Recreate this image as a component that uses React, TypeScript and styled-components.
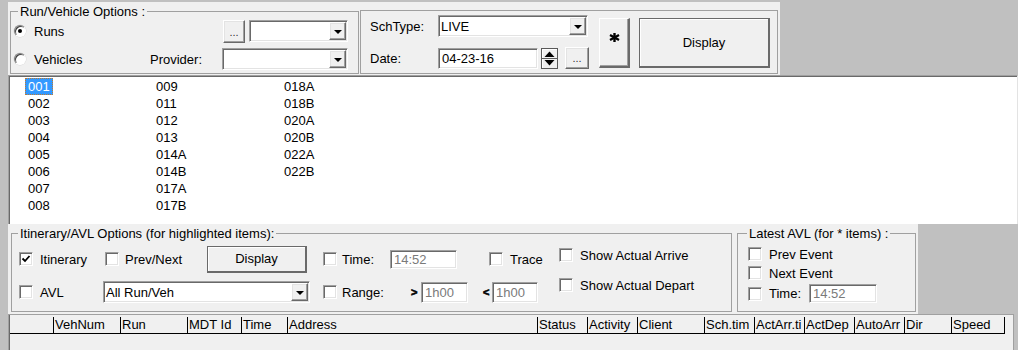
import React from "react";
import styled, { createGlobalStyle, css } from "styled-components";

const GlobalStyle = createGlobalStyle`
  html, body {
    margin: 0;
    padding: 0;
  }
  body {
    background: #c0c0c0;
    font-family: "Liberation Sans", Arial, sans-serif;
    font-size: 13px;
    color: #000;
  }
`;

const sunken = css`
  box-sizing: border-box;
  border: 1px solid;
  border-color: #a0a0a0 #fff #fff #a0a0a0;
  box-shadow: inset 1px 1px #696969, inset -1px -1px #e3e3e3;
  background: #fff;
`;

const raised = css`
  box-sizing: border-box;
  border: 1px solid;
  border-color: #fff #696969 #696969 #fff;
  box-shadow: inset -1px -1px #a0a0a0, inset 1px 1px #e3e3e3;
  background: #f0f0f0;
`;

const Window = styled.div`
  width: 1018px;
  height: 350px;
  overflow: hidden;
  box-sizing: border-box;
  padding-left: 8px;
  background: #c0c0c0;
  display: flex;
  flex-direction: column;
`;

const TopRow = styled.div`
  height: 75px;
  flex: none;
  display: flex;
  align-items: flex-start;
`;

const TopPanel = styled.div`
  margin-top: 2px;
  width: 772px;
  height: 73px;
  background: #f0f0f0;
  display: flex;
  align-items: flex-start;
  padding-left: 2px;
  box-sizing: border-box;
`;

const GroupBox = styled.fieldset<{ $w: number; $h: number; $top: number; $left?: number }>`
  margin: ${(p) => p.$top}px 0 0 ${(p) => p.$left ?? 0}px;
  padding: 0;
  min-width: 0;
  width: ${(p) => p.$w}px;
  height: ${(p) => p.$h}px;
  box-sizing: border-box;
  border: 1px solid #a0a0a0;
`;

const Legend = styled.legend<{ $indent: number }>`
  margin-left: ${(p) => p.$indent}px;
  padding: 0 2px;
  line-height: 15px;
  font-size: 13px;
`;

const RunVehicleBody = styled.div`
  padding: 1px 0 0 3px;
  display: flex;
  flex-direction: column;
  gap: 6px;
`;

const Row = styled.div<{ $h?: number }>`
  display: flex;
  align-items: center;
  height: ${(p) => p.$h ?? 22}px;
`;

const OptionLabel = styled.label<{ $w?: number; $gap?: number; $indent?: number }>`
  display: flex;
  align-items: center;
  gap: ${(p) => p.$gap ?? 7}px;
  margin-left: ${(p) => p.$indent ?? 0}px;
  width: ${(p) => (p.$w ? `${p.$w}px` : "auto")};
  flex: none;
  white-space: nowrap;
`;

const RadioDot = styled.span<{ $on?: boolean }>`
  width: 12px;
  height: 12px;
  flex: none;
  border-radius: 50%;
  box-sizing: border-box;
  background: #fff;
  border: 1px solid;
  border-color: #808080 #fff #fff #808080;
  box-shadow: inset 1px 1px #404040, 0 0 0 0.5px #d8d8d8;
  display: flex;
  align-items: center;
  justify-content: center;

  &::after {
    content: "";
    width: 4px;
    height: 4px;
    border-radius: 50%;
    background: ${(p) => (p.$on ? "#000" : "transparent")};
  }
`;

const CheckBox = styled.span`
  ${sunken};
  width: 14px;
  height: 14px;
  flex: none;
  display: flex;
  align-items: center;
  justify-content: center;
`;

const FieldLabel = styled.span<{ $w: number }>`
  width: ${(p) => p.$w}px;
  flex: none;
  white-space: nowrap;
`;

const ComboBox = styled.div<{ $w: number; $left?: number }>`
  ${sunken};
  width: ${(p) => p.$w}px;
  height: 22px;
  margin-left: ${(p) => p.$left ?? 0}px;
  flex: none;
  display: flex;
  align-items: center;
`;

const ComboText = styled.span`
  flex: 1;
  padding-left: 2px;
  white-space: nowrap;
  overflow: hidden;
`;

const DropButton = styled.span`
  ${raised};
  width: 17px;
  height: 18px;
  margin: 1px;
  flex: none;
  display: flex;
  align-items: center;
  justify-content: center;

  &::after {
    content: "";
    border-left: 4px solid transparent;
    border-right: 4px solid transparent;
    border-top: 4px solid #000;
    margin-top: 1px;
  }
`;

const TextField = styled.div<{ $w: number; $h?: number; $disabled?: boolean }>`
  ${sunken};
  width: ${(p) => p.$w}px;
  height: ${(p) => p.$h ?? 21}px;
  flex: none;
  padding-left: 3px;
  display: flex;
  align-items: center;
  color: ${(p) => (p.$disabled ? "#7a7a7a" : "#000")};
`;

const DotsButton = styled.span<{ $w: number; $h: number; $left?: number }>`
  ${raised};
  width: ${(p) => p.$w}px;
  height: ${(p) => p.$h}px;
  margin-left: ${(p) => p.$left ?? 0}px;
  flex: none;
  display: flex;
  align-items: flex-end;
  justify-content: center;
  font-size: 11px;
  line-height: 14px;
  padding-bottom: 3px;
  color: #333;
`;

const PushButton = styled.button<{ $w: number; $h: number; $left?: number; $top?: number }>`
  box-sizing: border-box;
  width: ${(p) => p.$w}px;
  height: ${(p) => p.$h}px;
  margin: ${(p) => p.$top ?? 0}px 0 0 ${(p) => p.$left ?? 0}px;
  flex: none;
  padding: 0;
  font-family: inherit;
  font-size: 13px;
  color: #000;
  background: #f0f0f0;
  border: 1px solid #6a6a6a;
  border-right-width: 2px;
  border-bottom-width: 2px;
  box-shadow: inset 1px 1px #fff;
`;

const AsteriskButton = styled(PushButton)`
  border-color: #fff #6a6a6a #6a6a6a #fff;
  box-shadow: inset -1px -1px #a0a0a0;
  display: flex;
  justify-content: center;
  align-items: flex-start;
  padding-top: 14px;
`;

const SchedBody = styled.div`
  padding: 4px 0 0 9px;
  display: flex;
  align-items: flex-start;
`;

const SchedFields = styled.div`
  display: flex;
  flex-direction: column;
  gap: 10px;
`;

const RunList = styled.div`
  height: 149px;
  flex: none;
  box-sizing: border-box;
  background: #fff;
  border-top: 1px solid #a0a0a0;
  border-left: 1px solid #a0a0a0;
  border-right: 1px solid #e3e3e3;
  box-shadow: inset 1px 1px #696969;
  padding: 2px 0 0 17px;
  display: grid;
  grid-auto-flow: column;
  grid-template-rows: repeat(8, 17px);
  grid-auto-columns: 128px;
`;

const RunCell = styled.div`
  display: flex;
  align-items: center;
`;

const RunText = styled.span<{ $selected?: boolean }>`
  line-height: 15px;
  padding: 0 2px;
  box-sizing: border-box;
  border: 1px dotted ${(p) => (p.$selected ? "#c07a30" : "transparent")};
  margin-left: -1px;
  background: ${(p) => (p.$selected ? "#3399ff" : "transparent")};
  color: ${(p) => (p.$selected ? "#fff" : "#000")};
`;

const BottomRow = styled.div`
  height: 90px;
  flex: none;
  display: flex;
`;

const BottomPanel = styled.div`
  width: 910px;
  background: #f0f0f0;
  display: flex;
  align-items: flex-start;
  padding-left: 3px;
  box-sizing: border-box;
`;

const ItineraryBody = styled.div`
  display: flex;
  align-items: flex-start;
  padding-left: 7px;
`;

const OptionsGrid = styled.div`
  margin-top: 3px;
  display: grid;
  grid-template-columns: 84px 220px 236px;
  grid-template-rows: 30px 30px;
  row-gap: 3px;
  align-items: center;
`;

const GridCell = styled.div`
  display: flex;
  align-items: center;
`;

const ShowColumn = styled.div`
  margin-top: 4px;
  display: flex;
  flex-direction: column;
  gap: 10px;
`;

const ShowItem = styled.div`
  height: 20px;
  display: flex;
  align-items: center;
`;

const Chevron = styled.span<{ $w: number; $left: number }>`
  width: ${(p) => p.$w}px;
  margin-left: ${(p) => p.$left}px;
  font-weight: bold;
  font-size: 11px;
  flex: none;
  -webkit-text-stroke: 0.6px #000;
`;

const LatestBody = styled.div`
  padding: 4px 0 0 10px;
  display: flex;
  flex-direction: column;
  gap: 1px;
`;

const GridArea = styled.div`
  flex: 1;
  background: #f0f0f0;
  border-top: 1px solid #a0a0a0;
  border-left: 1px solid #a0a0a0;
  box-shadow: inset 1px 0 #696969;
  padding: 1px 0 0 1px;
  margin-right: 4px;
  border-right: 1px solid #a0a0a0;
`;

const HeaderRow = styled.div`
  display: inline-flex;
  height: 17px;
  box-sizing: border-box;
  border-bottom: 1px solid #000;
  margin-top: 1px;
`;

const HeaderCell = styled.div<{ $w: number }>`
  width: ${(p) => p.$w}px;
  box-sizing: border-box;
  border-right: 1px solid #000;
  padding-left: 1px;
  line-height: 16px;
  white-space: nowrap;
  overflow: hidden;
`;

const CheckMark = () => (
  <svg width="10" height="10" viewBox="0 0 10 10">
    <polyline points="1.5,4.5 4,7 8.5,2" fill="none" stroke="#000" strokeWidth="1.8" />
  </svg>
);

const SpinIcon = () => (
  <svg width="17" height="21" viewBox="0 0 17 21" style={{ flex: "none", marginLeft: 3 }}>
    <rect x="0.5" y="0.5" width="16" height="20" fill="#f0f0f0" stroke="#5a5a5a" />
    <line x1="1" y1="1.5" x2="16" y2="1.5" stroke="#fff" />
    <line x1="1.5" y1="1" x2="1.5" y2="20" stroke="#fff" />
    <line x1="1" y1="10.5" x2="16" y2="10.5" stroke="#5a5a5a" />
    <polygon points="3.5,9 13.5,9 8.5,3.5" fill="#000" />
    <polygon points="3.5,12 13.5,12 8.5,17.5" fill="#000" />
  </svg>
);

const HeavyAsterisk = () => (
  <svg width="11" height="9" viewBox="0 0 11 9">
    <g stroke="#000" strokeWidth="2.4">
      <line x1="5.5" y1="0" x2="5.5" y2="9" />
      <line x1="1" y1="2" x2="10" y2="7" />
      <line x1="1" y1="7" x2="10" y2="2" />
    </g>
  </svg>
);

type OptProps = { label: string; checked?: boolean; w?: number; gap?: number; indent?: number };

const Check = ({ label, checked, w, gap, indent }: OptProps) => (
  <OptionLabel $w={w} $gap={gap} $indent={indent}>
    <CheckBox>{checked && <CheckMark />}</CheckBox>
    <span>{label}</span>
  </OptionLabel>
);

const Radio = ({ label, checked, w }: OptProps) => (
  <OptionLabel $w={w} $gap={8}>
    <RadioDot $on={checked} />
    <span>{label}</span>
  </OptionLabel>
);

const Combo = ({ w, value, left }: { w: number; value?: string; left?: number }) => (
  <ComboBox $w={w} $left={left}>
    <ComboText>{value}</ComboText>
    <DropButton />
  </ComboBox>
);

const runs = [
  "001", "002", "003", "004", "005", "006", "007", "008",
  "009", "011", "012", "013", "014A", "014B", "017A", "017B",
  "018A", "018B", "020A", "020B", "022A", "022B",
];

const columns = [
  { label: "", w: 44 },
  { label: "VehNum", w: 67 },
  { label: "Run", w: 67 },
  { label: "MDT Id", w: 54 },
  { label: "Time", w: 46 },
  { label: "Address", w: 250 },
  { label: "Status", w: 50 },
  { label: "Activity", w: 50 },
  { label: "Client", w: 67 },
  { label: "Sch.tim", w: 50 },
  { label: "ActArr.ti", w: 50 },
  { label: "ActDep", w: 50 },
  { label: "AutoArr", w: 50 },
  { label: "Dir", w: 47 },
  { label: "Speed", w: 53 },
];

const App = () => {
  return (
    <>
      <GlobalStyle />
      <Window>
        <TopRow>
          <TopPanel>
            <GroupBox $w={349} $h={70} $top={2}>
              <Legend $indent={7}>Run/Vehicle Options :</Legend>
              <RunVehicleBody>
                <Row>
                  <Radio label="Runs" checked w={209} />
                  <DotsButton $w={22} $h={23}>...</DotsButton>
                  <Combo w={99} left={4} />
                </Row>
                <Row>
                  <Radio label="Vehicles" w={136} />
                  <FieldLabel $w={72}>Provider:</FieldLabel>
                  <Combo w={126} />
                </Row>
              </RunVehicleBody>
            </GroupBox>
            <GroupBox $w={418} $h={64} $top={8} $left={1}>
              <SchedBody>
                <SchedFields>
                  <Row>
                    <FieldLabel $w={68}>SchType:</FieldLabel>
                    <Combo w={150} value="LIVE" />
                  </Row>
                  <Row>
                    <FieldLabel $w={68}>Date:</FieldLabel>
                    <TextField $w={100}>04-23-16</TextField>
                    <SpinIcon />
                    <DotsButton $w={24} $h={22} $left={7}>...</DotsButton>
                  </Row>
                </SchedFields>
                <AsteriskButton $w={31} $h={50} $left={10} $top={3}>
                  <HeavyAsterisk />
                </AsteriskButton>
                <PushButton $w={131} $h={50} $left={9} $top={3}>
                  Display
                </PushButton>
              </SchedBody>
            </GroupBox>
          </TopPanel>
        </TopRow>

        <RunList>
          {runs.map((r, i) => (
            <RunCell key={r}>
              <RunText $selected={i === 0}>{r}</RunText>
            </RunCell>
          ))}
        </RunList>

        <BottomRow>
          <BottomPanel>
            <GroupBox $w={721} $h={86} $top={2}>
              <Legend $indent={6}>Itinerary/AVL Options (for highlighted items):</Legend>
              <ItineraryBody>
                <OptionsGrid>
                  <GridCell>
                    <Check label="Itinerary" checked />
                  </GridCell>
                  <GridCell>
                    <Check label="Prev/Next" w={102} gap={6} indent={2} />
                    <PushButton $w={100} $h={27}>Display</PushButton>
                  </GridCell>
                  <GridCell>
                    <Check label="Time:" w={67} gap={5} />
                    <TextField $w={67} $h={19} $disabled>14:52</TextField>
                    <Check label="Trace" indent={32} />
                  </GridCell>
                  <GridCell>
                    <Check label="AVL" />
                  </GridCell>
                  <GridCell>
                    <Combo w={207} value="All Run/Veh" />
                  </GridCell>
                  <GridCell>
                    <Check label="Range:" w={88} gap={5} />
                    <Chevron $w={10} $left={0}>&gt;</Chevron>
                    <TextField $w={47} $disabled>1h00</TextField>
                    <Chevron $w={9} $left={15}>&lt;</Chevron>
                    <TextField $w={46} $disabled>1h00</TextField>
                  </GridCell>
                </OptionsGrid>
                <ShowColumn>
                  <ShowItem>
                    <Check label="Show Actual Arrive" />
                  </ShowItem>
                  <ShowItem>
                    <Check label="Show Actual Depart" />
                  </ShowItem>
                </ShowColumn>
              </ItineraryBody>
            </GroupBox>
            <GroupBox $w={179} $h={86} $top={2} $left={5}>
              <Legend $indent={9}>Latest AVL (for * items) :</Legend>
              <LatestBody>
                <Row $h={18}>
                  <Check label="Prev Event" gap={7} />
                </Row>
                <Row $h={18}>
                  <Check label="Next Event" gap={7} />
                </Row>
                <Row $h={21}>
                  <Check label="Time:" w={61} gap={7} />
                  <TextField $w={68} $h={19} $disabled>14:52</TextField>
                </Row>
              </LatestBody>
            </GroupBox>
          </BottomPanel>
        </BottomRow>

        <GridArea>
          <HeaderRow>
            {columns.map((c, i) => (
              <HeaderCell key={i} $w={c.w}>
                {c.label}
              </HeaderCell>
            ))}
          </HeaderRow>
        </GridArea>
      </Window>
    </>
  );
};

export default App;
